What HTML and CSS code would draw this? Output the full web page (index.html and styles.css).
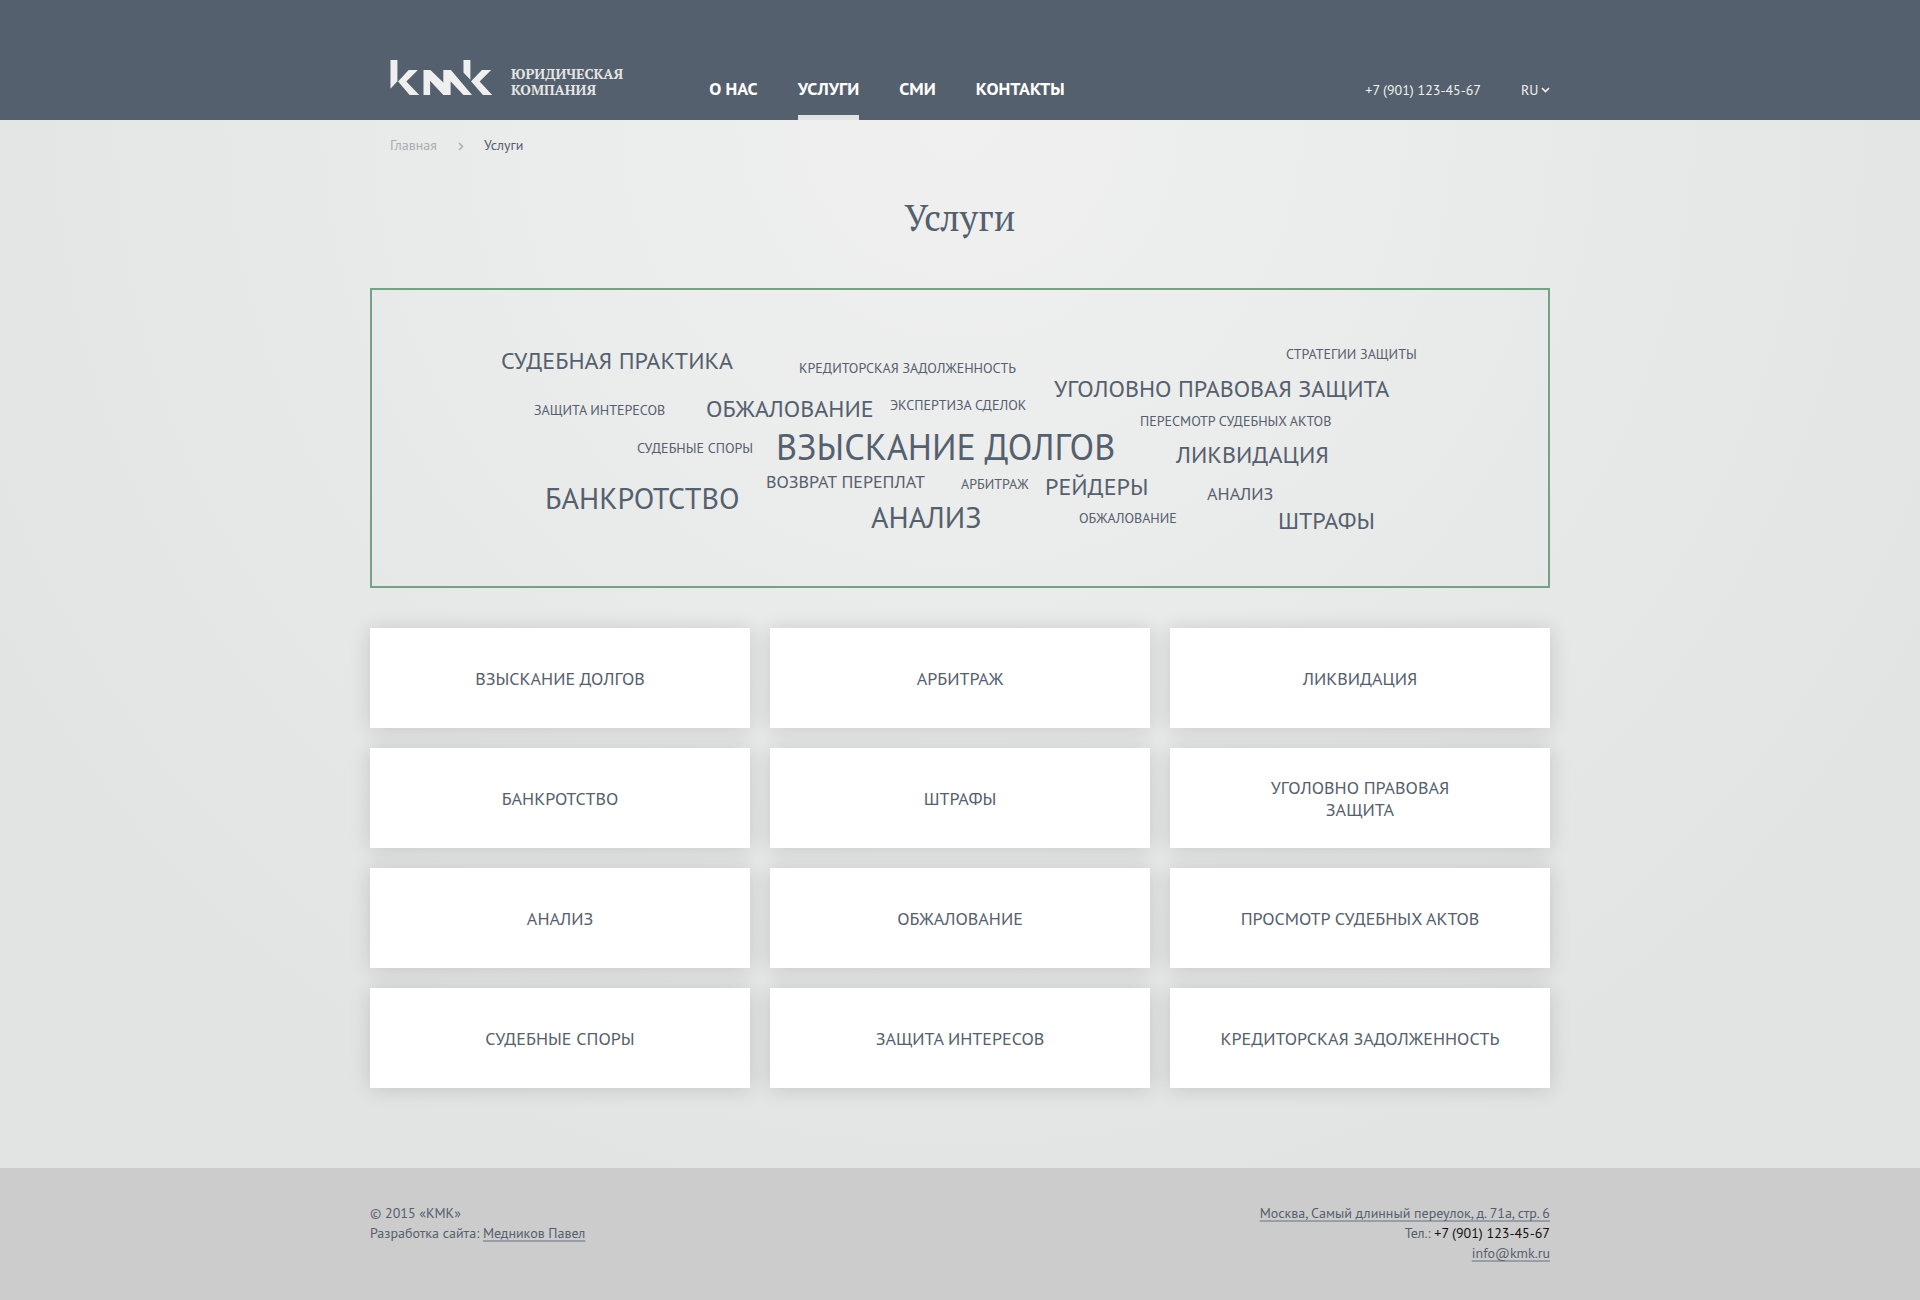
FILE: index.html
```html
<!DOCTYPE html>
<html lang="ru">
<head>
<meta charset="utf-8">
<meta name="viewport" content="width=device-width, initial-scale=1">
<title>Услуги — КМК</title>
<link rel="stylesheet" href="styles.css">
</head>
<body>
<header class="header">
  <div class="container header-row">
    <a class="logo" href="#">
      <svg class="logo-mark" viewBox="90 60 309 106" aria-hidden="true">
        <path d="M90 60h21v64L90 147zM145 90h28l-35 35 39 41h-29l-35-41z"/>
        <path d="M190 166V90h21l39 38V90h23l64 76h-26l-39-42v42h-22l-40-43v43z"/>
        <path d="M311 60h21v60l-21-22zM367 90h28l-35 35 38 41h-28l-36-42z"/>
      </svg>
      <span class="logo-text">ЮРИДИЧЕСКАЯ<br>КОМПАНИЯ</span>
    </a>
    <nav class="nav">
      <a class="nav-link" href="#">О НАС</a>
      <a class="nav-link active" href="#">УСЛУГИ</a>
      <a class="nav-link" href="#">СМИ</a>
      <a class="nav-link" href="#">КОНТАКТЫ</a>
    </nav>
    <div class="contacts">
      <a class="phone" href="tel:+79011234567">+7 (901) 123-45-67</a>
      <label class="lang">
        <select class="lang-select" aria-label="Язык">
          <option>RU</option>
        </select>
        <svg class="lang-arrow" viewBox="0 0 9 6" aria-hidden="true"><path d="M1 1l3.5 3.5L8 1"/></svg>
      </label>
    </div>
  </div>
</header>

<main class="main">
  <div class="container">
    <nav class="breadcrumbs" aria-label="Навигация">
      <a class="crumb" href="#">Главная</a>
      <svg class="crumb-arrow" viewBox="0 0 6 9" aria-hidden="true"><path d="M1 1l3.5 3.5L1 8"/></svg>
      <span>Услуги</span>
    </nav>
    <h1 class="title">Услуги</h1>

    <div class="cloud">
      <a class="tag l w1" href="#">СУДЕБНАЯ ПРАКТИКА</a>
      <a class="tag s w2" href="#">КРЕДИТОРСКАЯ ЗАДОЛЖЕННОСТЬ</a>
      <a class="tag s w3" href="#">СТРАТЕГИИ ЗАЩИТЫ</a>
      <a class="tag l w4" href="#">УГОЛОВНО ПРАВОВАЯ ЗАЩИТА</a>
      <a class="tag s w5" href="#">ЗАЩИТА ИНТЕРЕСОВ</a>
      <a class="tag l w6" href="#">ОБЖАЛОВАНИЕ</a>
      <a class="tag s w7" href="#">ЭКСПЕРТИЗА СДЕЛОК</a>
      <a class="tag s w8" href="#">ПЕРЕСМОТР СУДЕБНЫХ АКТОВ</a>
      <a class="tag s w9" href="#">СУДЕБНЫЕ СПОРЫ</a>
      <a class="tag xxl w10" href="#">ВЗЫСКАНИЕ ДОЛГОВ</a>
      <a class="tag l w11" href="#">ЛИКВИДАЦИЯ</a>
      <a class="tag xl w12" href="#">БАНКРОТСТВО</a>
      <a class="tag m w13" href="#">ВОЗВРАТ ПЕРЕПЛАТ</a>
      <a class="tag s w14" href="#">АРБИТРАЖ</a>
      <a class="tag l w15" href="#">РЕЙДЕРЫ</a>
      <a class="tag m w16" href="#">АНАЛИЗ</a>
      <a class="tag xl w17" href="#">АНАЛИЗ</a>
      <a class="tag s w18" href="#">ОБЖАЛОВАНИЕ</a>
      <a class="tag l w19" href="#">ШТРАФЫ</a>
    </div>

    <div class="cards">
      <a class="card" href="#">ВЗЫСКАНИЕ ДОЛГОВ</a>
      <a class="card" href="#">АРБИТРАЖ</a>
      <a class="card" href="#">ЛИКВИДАЦИЯ</a>
      <a class="card" href="#">БАНКРОТСТВО</a>
      <a class="card" href="#">ШТРАФЫ</a>
      <a class="card" href="#">УГОЛОВНО ПРАВОВАЯ<br>ЗАЩИТА</a>
      <a class="card" href="#">АНАЛИЗ</a>
      <a class="card" href="#">ОБЖАЛОВАНИЕ</a>
      <a class="card" href="#">ПРОСМОТР СУДЕБНЫХ АКТОВ</a>
      <a class="card" href="#">СУДЕБНЫЕ СПОРЫ</a>
      <a class="card" href="#">ЗАЩИТА ИНТЕРЕСОВ</a>
      <a class="card" href="#">КРЕДИТОРСКАЯ ЗАДОЛЖЕННОСТЬ</a>
    </div>
  </div>
</main>

<footer class="footer">
  <div class="container footer-row">
    <div>
      © 2015 «КМК»<br>
      Разработка сайта: <a class="link" href="#">Медников Павел</a>
    </div>
    <address class="address">
      <a class="link" href="#">Москва, Самый длинный переулок, д. 71а, стр. 6</a><br>
      Тел.: <a class="footer-phone" href="tel:+79011234567">+7 (901) 123-45-67</a><br>
      <a class="link" href="mailto:info@kmk.ru">info@kmk.ru</a>
    </address>
  </div>
</footer>
</body>
</html>
```
FILE: styles.css
```css
* {
  box-sizing: border-box;
}

body {
  margin: 0;
  min-height: 100vh;
  display: flex;
  flex-direction: column;
  font: 14px/20px "PT Sans", "Noto Sans", sans-serif;
  color: #55606e;
  background: #e1e4e3;
}

a {
  color: inherit;
  text-decoration: none;
}

.container {
  max-width: 1180px;
  margin: 0 auto;
}

/* Header */
.header {
  background: #55606e;
  color: #f0f0f0;
}

.header-row {
  display: flex;
  align-items: flex-end;
  min-height: 120px;
  padding-left: 20px;
}

.logo {
  display: flex;
  align-items: flex-end;
  gap: 18px;
  padding-bottom: 22px;
}

.logo-mark {
  width: 103px;
  height: 35px;
  margin-bottom: 3px;
  fill: #efefef;
}

.logo-text {
  font: bold 14px/16px "PT Serif", "Noto Serif", "Liberation Serif", serif;
  color: #e4e6e6;
}

.nav {
  display: flex;
  gap: 40px;
  margin-left: 86px;
}

.nav-link {
  padding-bottom: 14px;
  border-bottom: 5px solid transparent;
  font-size: 18px;
  line-height: 24px;
  font-weight: bold;
  color: #fff;
}

.nav-link.active {
  border-color: #e1e4e3;
}

.contacts {
  display: flex;
  gap: 40px;
  margin-left: auto;
  padding-bottom: 20px;
}

.lang {
  display: flex;
  align-items: center;
  gap: 2px;
}

.lang-select {
  appearance: none;
  margin: 0;
  padding: 0;
  border: 0;
  background: none;
  font: inherit;
  color: inherit;
}

.lang-arrow {
  width: 9px;
  height: 6px;
  fill: none;
  stroke: #f0f0f0;
  stroke-width: 1.7;
}

/* Page */
.main {
  flex: 1;
  padding-bottom: 80px;
  background: radial-gradient(circle 1150px at 50% 0, #f0f0f0, #e1e4e3);
}

.breadcrumbs {
  display: flex;
  align-items: center;
  padding: 15px 20px 0;
}

.crumb {
  color: #a9adb2;
}

.crumb-arrow {
  width: 6px;
  height: 9px;
  margin: 2px 20px 0 21px;
  fill: none;
  stroke: #a9adb2;
  stroke-width: 1.5;
}

.title {
  margin: 39px 0 46px;
  font: 36px/48px "PT Serif", "Noto Serif", "Liberation Serif", serif;
  text-align: center;
}

/* Tag cloud */
.cloud {
  position: relative;
  height: 300px;
  border: 2px solid #76a185;
}

.tag {
  position: absolute;
  white-space: nowrap;
}

.s { font-size: 14px; line-height: 20px; }
.m { font-size: 18px; line-height: 24px; }
.l { font-size: 24px; line-height: 32px; }
.xl { font-size: 30px; line-height: 40px; }
.xxl { font-size: 36px; line-height: 48px; }

.w1 { left: 129px; top: 55px; }
.w2 { left: 427px; top: 68px; }
.w3 { left: 914px; top: 54px; }
.w4 { left: 682px; top: 83px; }
.w5 { left: 162px; top: 110px; }
.w6 { left: 334px; top: 103px; }
.w7 { left: 518px; top: 105px; }
.w8 { left: 768px; top: 121px; }
.w9 { left: 265px; top: 148px; }
.w10 { left: 404px; top: 133px; }
.w11 { left: 804px; top: 149px; }
.w12 { left: 173px; top: 188px; }
.w13 { left: 394px; top: 180px; }
.w14 { left: 589px; top: 184px; }
.w15 { left: 673px; top: 181px; }
.w16 { left: 835px; top: 192px; }
.w17 { left: 499px; top: 207px; }
.w18 { left: 707px; top: 218px; }
.w19 { left: 906px; top: 215px; }

/* Service cards */
.cards {
  display: grid;
  grid-template-columns: repeat(3, 1fr);
  gap: 20px;
  margin-top: 40px;
}

.card {
  display: flex;
  align-items: center;
  justify-content: center;
  min-height: 100px;
  padding-top: 1px;
  background: #fff;
  box-shadow: 0 1px 20px rgba(0, 0, 0, .14);
  font-size: 18px;
  line-height: 22px;
  text-align: center;
}

/* Footer */
.footer {
  padding: 35px 0 37px;
  background: #ccc;
}

.footer-row {
  display: flex;
  justify-content: space-between;
}

.address {
  font-style: normal;
  text-align: right;
}

.link {
  text-decoration: underline 2px #999ea6;
  text-underline-offset: 2px;
  text-decoration-skip-ink: none;
}

.footer-phone {
  color: #111;
}
```
